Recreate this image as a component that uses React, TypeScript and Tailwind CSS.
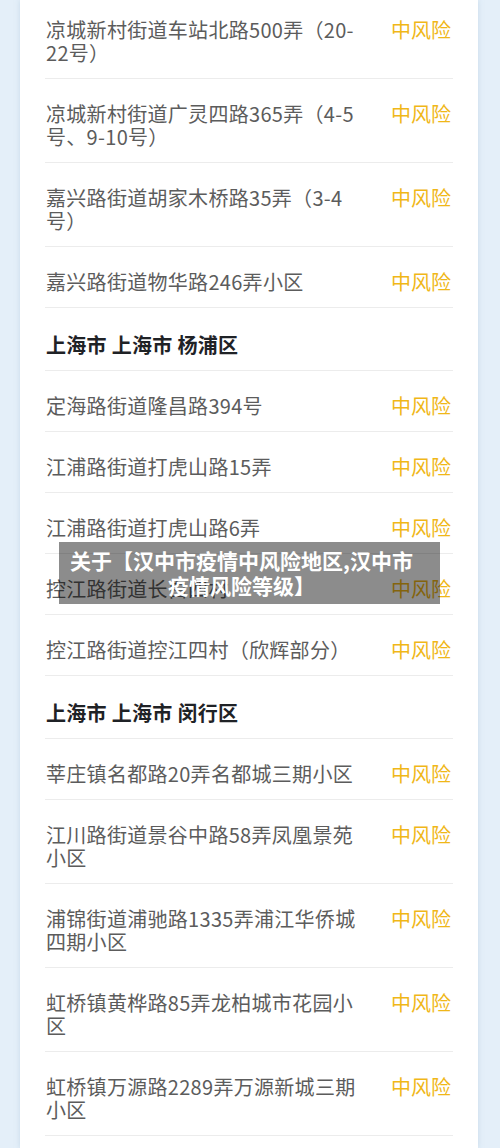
import React from 'react';

type Row =
  | { kind: 'head'; text: string }
  | { kind: 'item'; text: string; risk: string };

const rows: Row[] = [
  { kind: 'item', text: '凉城新村街道车站北路500弄（20-22号）', risk: '中风险' },
  { kind: 'item', text: '凉城新村街道广灵四路365弄（4-5号、9-10号）', risk: '中风险' },
  { kind: 'item', text: '嘉兴路街道胡家木桥路35弄（3-4号）', risk: '中风险' },
  { kind: 'item', text: '嘉兴路街道物华路246弄小区', risk: '中风险' },
  { kind: 'head', text: '上海市 上海市 杨浦区' },
  { kind: 'item', text: '定海路街道隆昌路394号', risk: '中风险' },
  { kind: 'item', text: '江浦路街道打虎山路15弄', risk: '中风险' },
  { kind: 'item', text: '江浦路街道打虎山路6弄', risk: '中风险' },
  { kind: 'item', text: '控江路街道长白四村', risk: '中风险' },
  { kind: 'item', text: '控江路街道控江四村（欣辉部分）', risk: '中风险' },
  { kind: 'head', text: '上海市 上海市 闵行区' },
  { kind: 'item', text: '莘庄镇名都路20弄名都城三期小区', risk: '中风险' },
  { kind: 'item', text: '江川路街道景谷中路58弄凤凰景苑小区', risk: '中风险' },
  { kind: 'item', text: '浦锦街道浦驰路1335弄浦江华侨城四期小区', risk: '中风险' },
  { kind: 'item', text: '虹桥镇黄桦路85弄龙柏城市花园小区', risk: '中风险' },
  { kind: 'item', text: '虹桥镇万源路2289弄万源新城三期小区', risk: '中风险' },
];

const font = { fontFamily: '"Noto Sans CJK SC", "Noto Sans", sans-serif' };

export default function App() {
  return (
    <div className="relative h-[1148px] w-[500px] overflow-hidden bg-[#e4eff9]" style={font}>
      <div className="ml-[20px] mr-[22px] h-full bg-white px-[25px] shadow-[0_0_5px_rgba(170,195,220,0.5)]">
        {rows.map((row, i) =>
          row.kind === 'head' ? (
            <div key={i} className="border-b border-[#ececec] pt-[25px] pb-[14px] pl-[1px]">
              <div className="text-[20px] leading-[23px] font-bold tracking-[0.3px] text-[#1f2226]">{row.text}</div>
            </div>
          ) : (
            <div
              key={i}
              className={`flex items-start justify-between border-b border-[#ececec] pb-[14px] pl-[1px] pr-[2px] ${i === 0 ? 'pt-[18px]' : 'pt-[23px]'}`}
            >
              <div className="w-[318px] text-[20px] leading-[23px] tracking-[0.3px] text-[#5c5c5c]">{row.text}</div>
              <div className="shrink-0 text-[20px] leading-[23px] text-[#f0b718]">{row.risk}</div>
            </div>
          )
        )}
      </div>

      <div className="absolute left-[59px] top-[542px] w-[381px] bg-black/45 pl-[8px] pr-[24px] py-[6px] text-center text-[21px] leading-[25px] font-bold text-white">
        关于【汉中市疫情中风险地区,汉中市疫情风险等级】
      </div>
    </div>
  );
}
